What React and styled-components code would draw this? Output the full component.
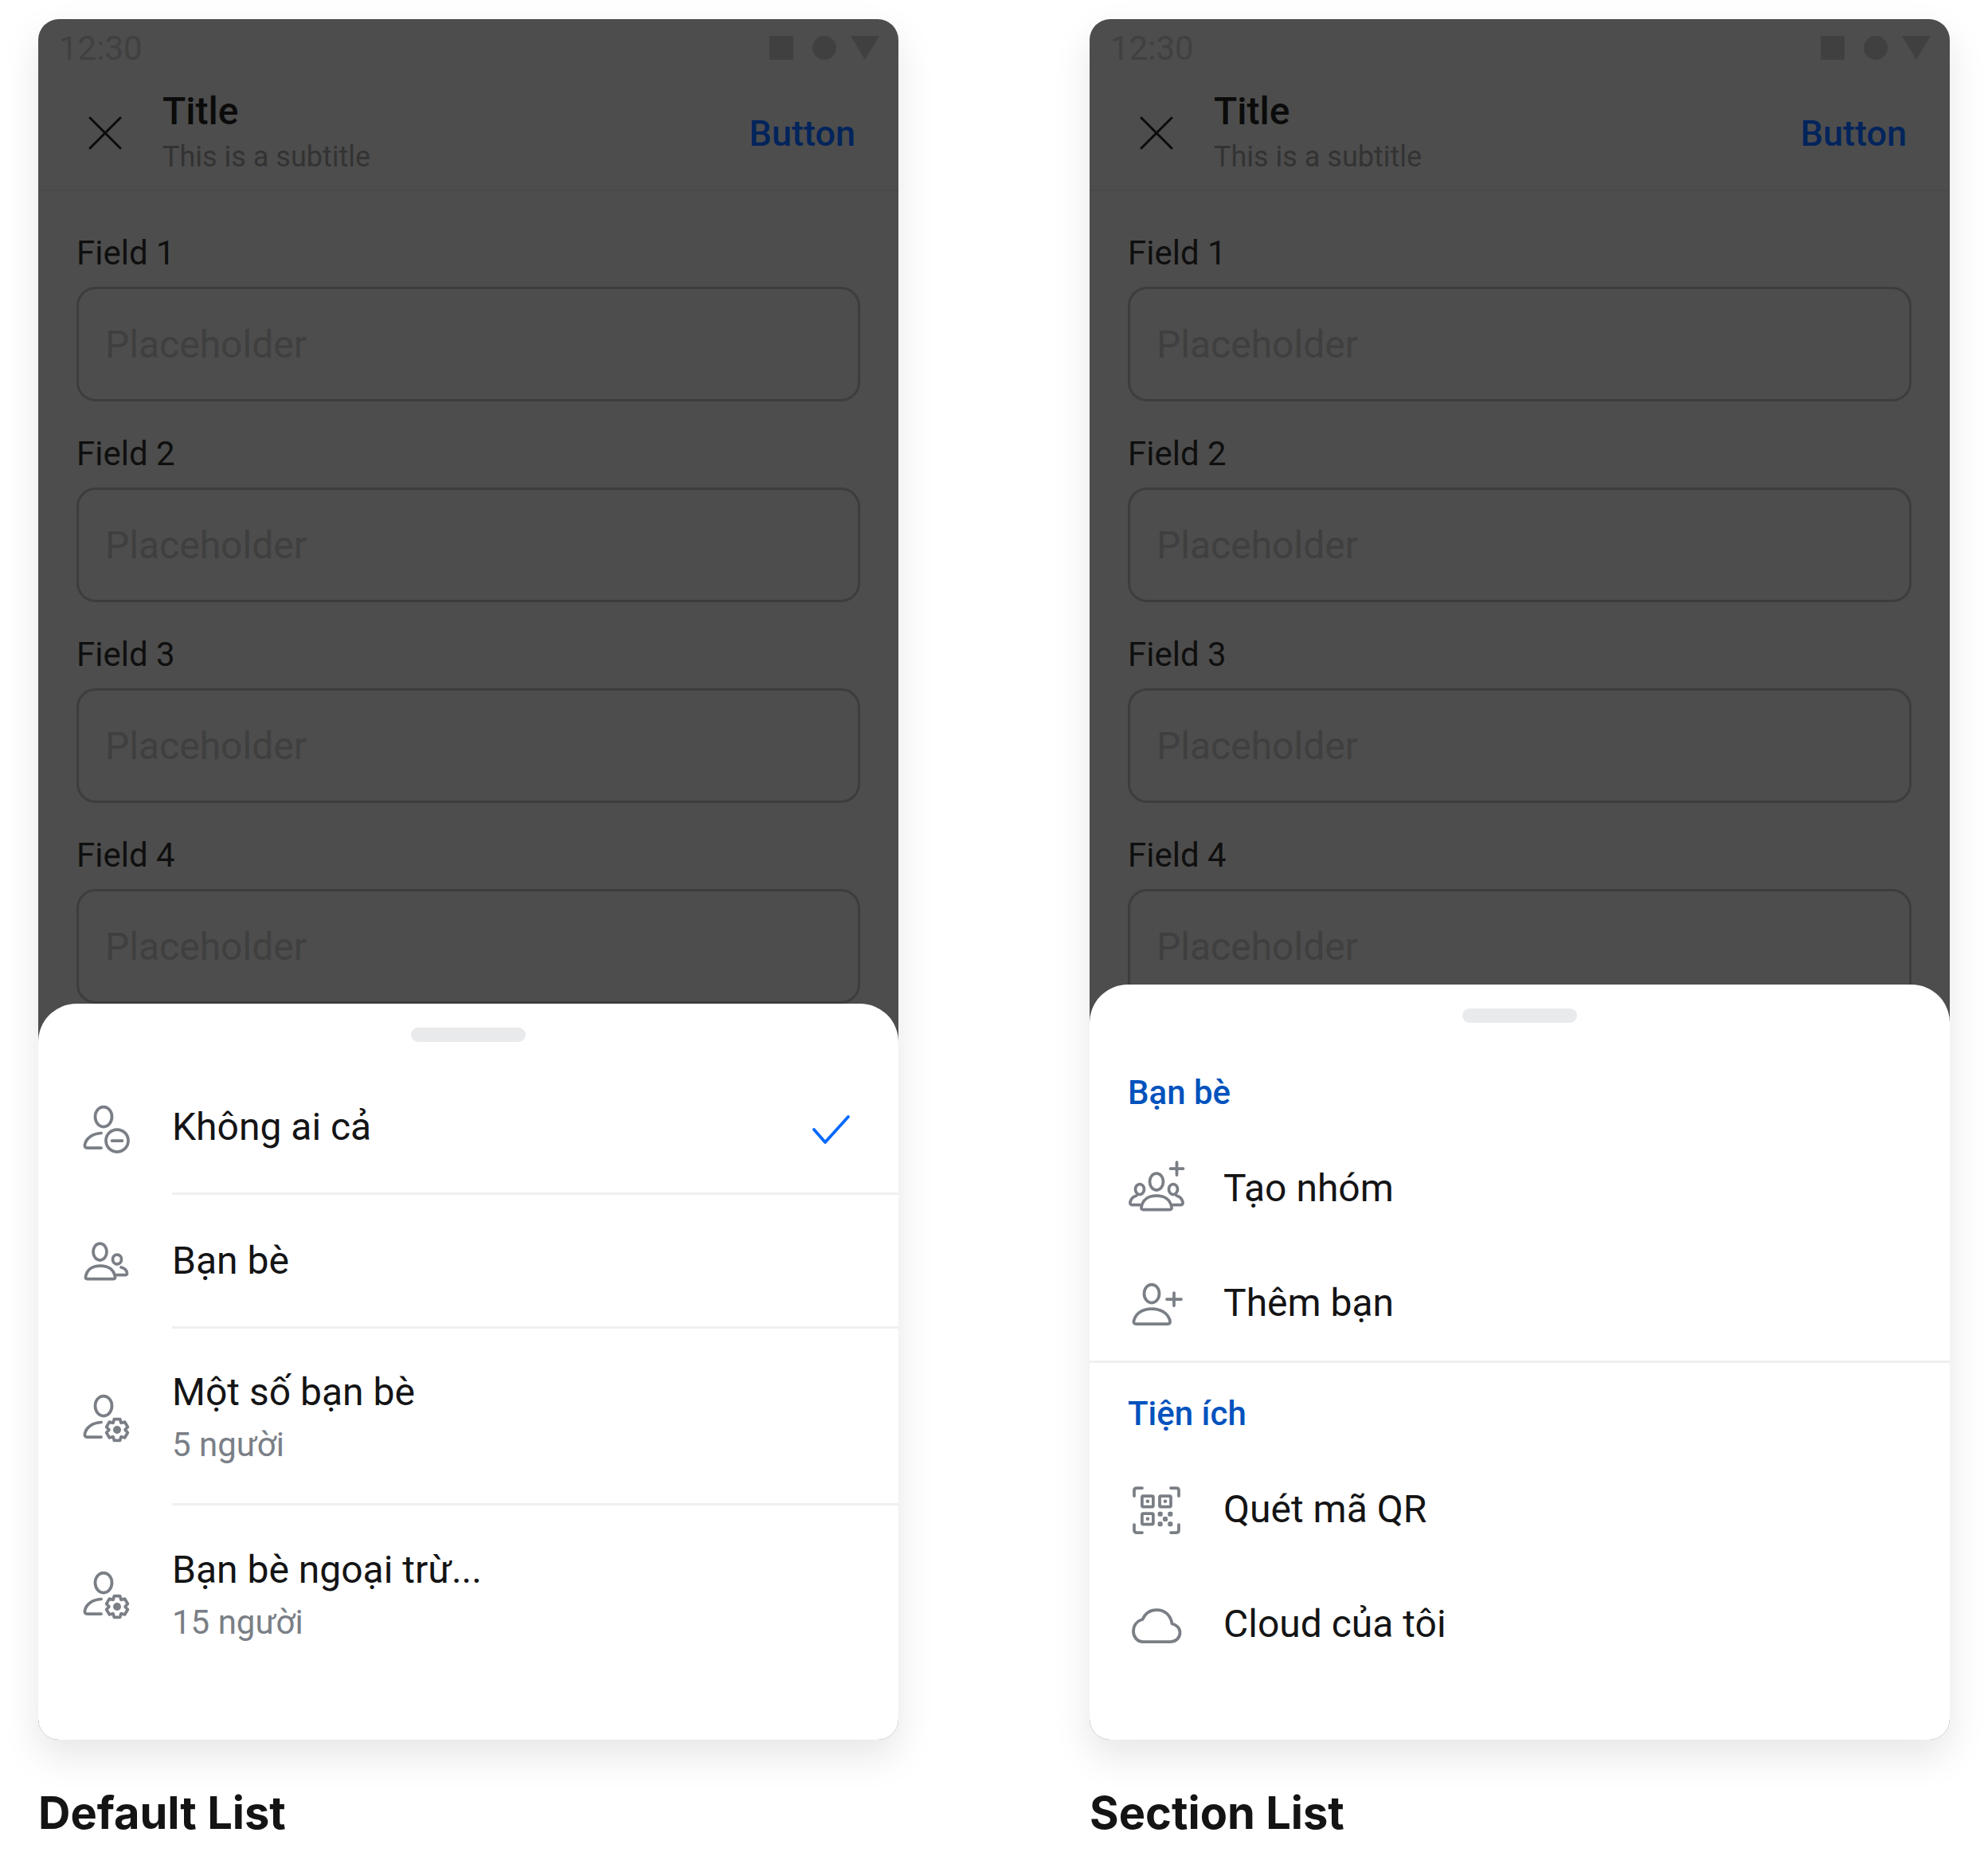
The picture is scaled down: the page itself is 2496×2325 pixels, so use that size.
import React from "react";
import styled, { createGlobalStyle } from "styled-components";

const GlobalStyle = createGlobalStyle`
  html, body { margin: 0; padding: 0; background: #fff; }
  body { font-family: Roboto, "Noto Sans", sans-serif; color: #141415; }
  * { box-sizing: border-box; }
`;

const Page = styled.div`
  width: 2496px;
  height: 2325px;
  padding: 24px 48px 0;
  display: flex;
  gap: 240px;
  overflow: hidden;
`;

const Column = styled.section`
  width: 1080px;
  display: flex;
  flex-direction: column;
`;

const Phone = styled.div`
  position: relative;
  width: 1080px;
  height: 2160px;
  background: #4d4d4d;
  border-radius: 26px;
  overflow: hidden;
  display: flex;
  flex-direction: column;
`;

const PhoneShadow = styled.div`
  border-radius: 26px;
  box-shadow: 0 20px 48px rgba(0, 0, 0, 0.1);
`;

const StatusBar = styled.div`
  height: 72px;
  padding: 0 24px 0 26px;
  display: flex;
  align-items: center;
  justify-content: space-between;
  font-size: 42px;
  color: #404040;
`;

const StatusIcons = styled.div`
  display: flex;
  align-items: center;
  gap: 24px;
`;

const StatusSquare = styled.div`
  width: 30px;
  height: 30px;
  background: #404040;
`;

const StatusDot = styled(StatusSquare)`
  border-radius: 50%;
`;

const StatusTriangle = styled.div`
  width: 36px;
  height: 30px;
  margin-left: -6px;
  background: #404040;
  clip-path: polygon(0 0, 100% 0, 50% 100%);
`;

const Header = styled.header`
  height: 144px;
  padding: 0 54px 0 48px;
  display: flex;
  align-items: center;
  gap: 36px;
  border-bottom: 2px solid #484848;
`;

const HeaderText = styled.div`
  flex: 1;
  display: flex;
  flex-direction: column;
`;

const Title = styled.div`
  font-size: 48px;
  line-height: 60px;
  font-weight: 500;
  color: #0b0b0b;
`;

const Subtitle = styled.div`
  font-size: 36px;
  line-height: 54px;
  color: #333;
`;

const HeaderButton = styled.div`
  font-size: 45px;
  font-weight: 500;
  color: #02245c;
`;

const Form = styled.div`
  padding: 48px 48px 0;
  display: flex;
  flex-direction: column;
  gap: 36px;
`;

const Field = styled.div`
  display: flex;
  flex-direction: column;
  gap: 12px;
`;

const FieldLabel = styled.div`
  font-size: 42px;
  line-height: 60px;
  color: #0f0f0f;
`;

const FieldInput = styled.div`
  height: 144px;
  padding: 0 33px;
  display: flex;
  align-items: center;
  border: 3px solid #3d3d3d;
  border-radius: 24px;
  font-size: 48px;
  color: #3f3f3f;
`;

const Sheet = styled.div`
  position: absolute;
  left: 0;
  right: 0;
  bottom: 0;
  height: ${({ $height }) => $height}px;
  padding-bottom: 72px;
  background: #fff;
  border-radius: 48px 48px 0 0;
`;

const HandleZone = styled.div`
  height: 72px;
  padding-top: 30px;
  display: flex;
  justify-content: center;
`;

const Handle = styled.div`
  width: 144px;
  height: 18px;
  border-radius: 9px;
  background: #e9eaec;
`;

const Row = styled.div`
  height: ${({ $height }) => $height}px;
  padding-left: 48px;
  display: flex;
  align-items: center;
  gap: 48px;
`;

const IconSlot = styled.div`
  width: 72px;
  height: 72px;
  flex: none;
`;

const RowBody = styled.div`
  flex: 1;
  height: 100%;
  padding-right: 48px;
  display: flex;
  align-items: center;
  justify-content: space-between;
  border-bottom: ${({ $divider }) => ($divider ? "3px solid #eef0f1" : "none")};
`;

const RowTitle = styled.div`
  font-size: 48px;
  line-height: 72px;
  color: #141415;
`;

const RowSub = styled.div`
  font-size: 42px;
  line-height: 60px;
  color: #7a7f86;
`;

const SectionHeader = styled.div`
  height: 112px;
  padding: 32px 48px 0;
  font-size: 42px;
  line-height: 64px;
  font-weight: 500;
  color: #0052bd;
`;

const SectionDivider = styled.div`
  height: 3px;
  background: #eef0f1;
`;

const Caption = styled.h2`
  margin: 58px 0 0;
  font-family: Inter, Roboto, sans-serif;
  font-size: 56px;
  line-height: 68px;
  font-weight: 700;
  color: #141415;
`;

const Glyph = styled.svg.attrs({ viewBox: "0 0 72 72", width: 72, height: 72 })`
  display: block;
  fill: none;
  stroke: #7a7e85;
  stroke-width: 3.75;
  stroke-linecap: round;
  stroke-linejoin: round;
`;

const Solid = styled.g`
  fill: #7a7e85;
  stroke: none;
`;

// half-body used by the icons that carry a badge at the lower right
const HalfBody = () => <path d="M31 42.5C20 43 12 49 10.5 57C10 59.5 11 61 13.5 61H31" />;

const gearPath = (cx, cy) => {
  const pts = [];
  for (let i = 0; i < 6; i++) {
    const a = (i * 60 - 90) * (Math.PI / 180);
    const w = 0.27;
    [[10.2, -0.5], [13.8, -w], [13.8, w], [10.2, 0.5]].forEach(([r, d]) => {
      pts.push(`${(cx + r * Math.cos(a + d)).toFixed(2)} ${(cy + r * Math.sin(a + d)).toFixed(2)}`);
    });
  }
  return `M${pts.join("L")}Z`;
};

const NobodyIcon = () => (
  <Glyph>
    <ellipse cx="34" cy="22" rx="10.5" ry="12.5" />
    <HalfBody />
    <circle cx="51" cy="52" r="14" />
    <path d="M44.5 52H57.5" />
  </Glyph>
);

const FriendsIcon = () => (
  <Glyph>
    <ellipse cx="29.5" cy="23.5" rx="8.5" ry="10.5" />
    <path d="M13.5 57.5H46.5C48 57.5 49 56.5 48.5 55C47 46 40 41 30 41C20 41 13 46 11.5 55C11 56.5 12 57.5 13.5 57.5Z" />
    <ellipse cx="51" cy="33" rx="5.5" ry="6" />
    <path d="M56 43C60 44 63 47 63.5 50C63.8 51.5 63 52.5 61.5 52.5H50" />
  </Glyph>
);

const GearUserIcon = () => (
  <Glyph>
    <ellipse cx="34" cy="22" rx="10.5" ry="12.5" />
    <HalfBody />
    <path d={gearPath(51, 52)} />
    <Solid>
      <circle cx="51" cy="52" r="5" />
    </Solid>
  </Glyph>
);

const GroupAddIcon = () => (
  <Glyph>
    <path d="M61.5 3V19M53.5 11H69.5" />
    <ellipse cx="36" cy="27.5" rx="8.5" ry="10.5" />
    <path d="M19.5 62.5H52.5C54.5 62.5 55.5 61.5 55 59.5C53.5 50 46 45 36 45C26 45 18.5 50 17 59.5C16.5 61.5 17.5 62.5 19.5 62.5Z" />
    <ellipse cx="15" cy="37" rx="5.5" ry="6.5" />
    <ellipse cx="57" cy="37" rx="5.5" ry="6.5" />
    <path d="M11 45C7 46 4 49 3 53C2.6 55.5 3.5 56.5 5.5 56.5H15" />
    <path d="M61 45C65 46 68 49 69 53C69.4 55.5 68.5 56.5 66.5 56.5H57" />
  </Glyph>
);

const AddFriendIcon = () => (
  <Glyph>
    <ellipse cx="30" cy="24" rx="9.5" ry="11.5" />
    <path d="M10 62H50C52.5 62 53.5 60.5 53 58.5C51 49 42 43 30 43C18 43 9.5 49 7.5 58.5C7 60.5 8 62 10 62Z" />
    <path d="M58 23V39M49 31H67" />
  </Glyph>
);

const QrIcon = () => (
  <Glyph>
    <path d="M8 19V12C8 10 9.5 9 11 9H18M54 9H61C63 9 64 10 64 12V19M8 55V62C8 64 9.5 65 11 65H18M64 55V62C64 64 63 65 61 65H54" />
    <rect x="17.9" y="19" width="14" height="13.5" rx="1.5" />
    <rect x="40" y="19" width="14" height="13.5" rx="1.5" />
    <rect x="17.9" y="41" width="14" height="13.5" rx="1.5" />
    <Solid>
      <circle cx="24.9" cy="25.7" r="2.3" />
      <circle cx="47" cy="25.7" r="2.3" />
      <circle cx="24.9" cy="47.7" r="2.3" />
      <rect x="37.7" y="38.7" width="6" height="6" rx="1.8" />
      <rect x="50.3" y="38.7" width="6" height="6" rx="1.8" />
      <rect x="44" y="45" width="6" height="6" rx="1.8" />
      <rect x="37.7" y="51.3" width="6" height="6" rx="1.8" />
      <rect x="50.3" y="51.3" width="6" height="6" rx="1.8" />
    </Solid>
  </Glyph>
);

const CloudIcon = () => (
  <Glyph>
    <path d="M19 58H54C60.5 58 65.5 53 65.5 46.5C65.5 41 61 36.5 55.5 35.5C54 25 47 18 36 18C28 18 22 22 18.5 30C11 32 7 38 7 45C7 52 12 58 19 58Z" />
  </Glyph>
);

const CloseIcon = () => (
  <Glyph style={{ stroke: "#0b0b0b", strokeWidth: 3 }}>
    <path d="M17 17L55 55M55 17L17 55" />
  </Glyph>
);

const CheckIcon = () => (
  <Glyph style={{ stroke: "#0068ff", strokeWidth: 3.75 }}>
    <path d="M14 39L28 55L57 23" />
  </Glyph>
);

const PhoneChrome = ({ children }) => (
  <PhoneShadow>
    <Phone>
      <StatusBar>
        12:30
        <StatusIcons>
          <StatusSquare />
          <StatusDot />
          <StatusTriangle />
        </StatusIcons>
      </StatusBar>
      <Header>
        <IconSlot>
          <CloseIcon />
        </IconSlot>
        <HeaderText>
          <Title>Title</Title>
          <Subtitle>This is a subtitle</Subtitle>
        </HeaderText>
        <HeaderButton>Button</HeaderButton>
      </Header>
      <Form>
        {[1, 2, 3, 4].map((n) => (
          <Field key={n}>
            <FieldLabel>Field {n}</FieldLabel>
            <FieldInput>Placeholder</FieldInput>
          </Field>
        ))}
      </Form>
      {children}
    </Phone>
  </PhoneShadow>
);

const defaultRows = [
  { icon: <NobodyIcon />, title: "Không ai cả", height: 168, divider: true, checked: true },
  { icon: <FriendsIcon />, title: "Bạn bè", height: 168, divider: true },
  { icon: <GearUserIcon />, title: "Một số bạn bè", sub: "5 người", height: 222, divider: true },
  { icon: <GearUserIcon />, title: "Bạn bè ngoại trừ...", sub: "15 người", height: 222 },
];

const sections = [
  {
    title: "Bạn bè",
    rows: [
      { icon: <GroupAddIcon />, title: "Tạo nhóm" },
      { icon: <AddFriendIcon />, title: "Thêm bạn" },
    ],
  },
  {
    title: "Tiện ích",
    rows: [
      { icon: <QrIcon />, title: "Quét mã QR" },
      { icon: <CloudIcon />, title: "Cloud của tôi" },
    ],
  },
];

const App = () => (
  <>
    <GlobalStyle />
    <Page>
      <Column>
        <PhoneChrome>
          <Sheet $height={924}>
            <HandleZone>
              <Handle />
            </HandleZone>
            {defaultRows.map((row) => (
              <Row key={row.title} $height={row.height}>
                <IconSlot>{row.icon}</IconSlot>
                <RowBody $divider={row.divider}>
                  <div>
                    <RowTitle>{row.title}</RowTitle>
                    {row.sub && <RowSub>{row.sub}</RowSub>}
                  </div>
                  {row.checked && (
                    <IconSlot>
                      <CheckIcon />
                    </IconSlot>
                  )}
                </RowBody>
              </Row>
            ))}
          </Sheet>
        </PhoneChrome>
        <Caption>Default List</Caption>
      </Column>
      <Column>
        <PhoneChrome>
          <Sheet $height={948}>
            <HandleZone>
              <Handle />
            </HandleZone>
            {sections.map((section, i) => (
              <React.Fragment key={section.title}>
                {i > 0 && <SectionDivider />}
                <SectionHeader>{section.title}</SectionHeader>
                {section.rows.map((row) => (
                  <Row key={row.title} $height={144}>
                    <IconSlot>{row.icon}</IconSlot>
                    <RowBody>
                      <RowTitle>{row.title}</RowTitle>
                    </RowBody>
                  </Row>
                ))}
              </React.Fragment>
            ))}
          </Sheet>
        </PhoneChrome>
        <Caption>Section List</Caption>
      </Column>
    </Page>
  </>
);

export default App;
